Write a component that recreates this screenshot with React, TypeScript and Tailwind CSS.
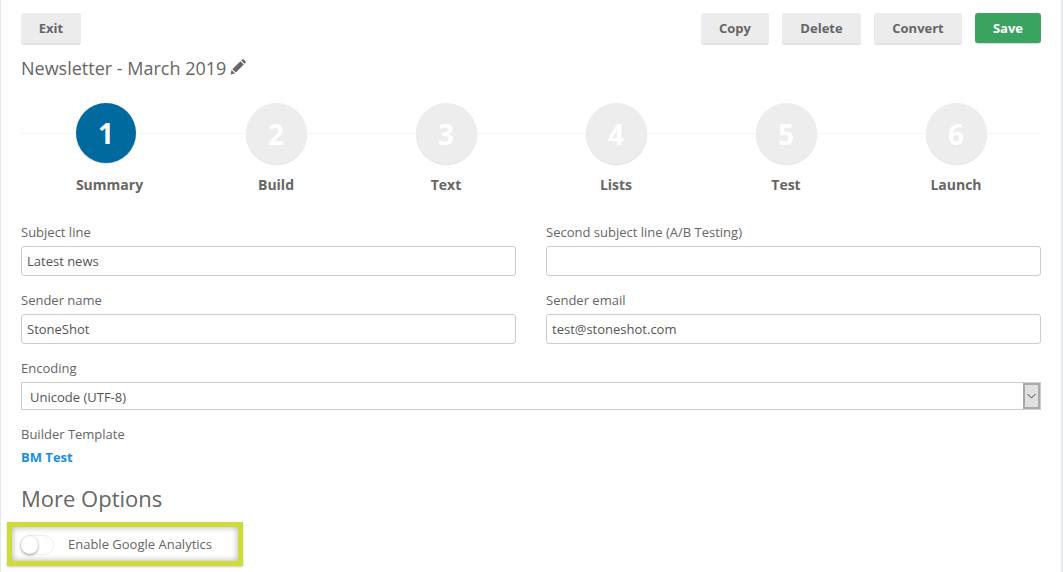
import React from "react";

const Btn = ({ w, children }: { w: string; children: React.ReactNode }) => (
  <button className={`${w} h-8 rounded-[3px] bg-[#ececec] border-b-2 border-[#e2e2e2] text-[13px] font-bold text-[#666] leading-[30px] text-center`}>
    {children}
  </button>
);

const Field = ({ label, value }: { label: string; value: string }) => (
  <div className="flex-1">
    <div className="text-[13px] leading-[18px] text-[#666] h-[18px]">{label}</div>
    <div className="mt-[5px] h-[30px] rounded-[3px] border border-[#ccc] bg-white px-[5px] text-[13px] leading-[28px] text-[#555]">{value}</div>
  </div>
);

const steps = ["Summary", "Build", "Text", "Lists", "Test", "Launch"];

export default function App() {
  return (
    <div className="h-[572px] w-[1063px] overflow-hidden bg-white border-l border-r-2 border-[#e4e9f0] pl-5 pr-5 pt-[13px] font-['Open_Sans',sans-serif] text-[#666]">
      <div className="flex w-[1020px] items-start">
        <Btn w="w-[60px]">Exit</Btn>
        <div className="ml-auto flex gap-[13px]">
          <Btn w="w-[68px]">Copy</Btn>
          <Btn w="w-[79px]">Delete</Btn>
          <Btn w="w-[88px]">Convert</Btn>
          <button className="h-[30px] w-[66px] rounded-[3px] bg-[#3aa35f] pt-px text-[13px] font-bold text-white shadow-[0_1px_1px_#d8d8d8]">Save</button>
        </div>
      </div>

      <div className="mt-[9px] flex h-[28px] items-center gap-[4px] text-[18px] leading-[28px] text-[#666]">
        <span>Newsletter - March 2019</span>
        <svg width="16" height="16" viewBox="0 0 16 16" className="-mt-[3px]" fill="#666">
          <path d="M0.5 15.5 L1.6 11 L5 14.4 Z" />
          <path d="M2.4 10.2 L10.4 2.2 L13.8 5.6 L5.8 13.6 Z" />
          <path d="M11.2 1.4 L12.3 0.4 Q13 -0.1 13.7 0.5 L15.5 2.3 Q16.1 3 15.6 3.7 L14.6 4.8 Z" />
        </svg>
      </div>

      <div className="relative mt-[21px] flex w-[1020px]">
        <div className="absolute left-0 right-0 top-[30px] h-px bg-[#f5f5f5]" />
        {steps.map((s, i) => (
          <div key={s} className="relative flex w-[170px] flex-col items-center">
            <div
              className={
                i === 0
                  ? "flex h-[60px] w-[60px] items-center justify-center rounded-full bg-[#006a9e] text-[28px] font-bold text-white shadow-[0_1px_2px_#ddd]"
                  : "flex h-[61px] w-[61px] items-center justify-center rounded-full bg-[#ededed] text-[28px] font-bold text-white shadow-[0_1px_1px_#e0e0e0]"
              }
            >
              {i + 1}
            </div>
            <div className={`text-[14px] font-bold leading-[20px] text-[#666] ${i === 0 ? "mt-[12px] pl-[7px]" : "mt-[11px]"}`}>{s}</div>
          </div>
        ))}
      </div>

      <div className="mt-[28px] w-[1020px]">
        <div className="flex gap-[30px]">
          <Field label="Subject line" value="Latest news" />
          <Field label="Second subject line (A/B Testing)" value="" />
        </div>
        <div className="mt-[15px] flex gap-[30px]">
          <Field label="Sender name" value="StoneShot" />
          <Field label="Sender email" value="test@stoneshot.com" />
        </div>
        <div className="mt-[15px] text-[13px] leading-[18px] text-[#666]">Encoding</div>
        <div className="mt-[5px] flex h-[28px] items-center border border-[#ccc] bg-white pl-2 text-[13px] text-[#555]">
          <span className="flex-1 pt-[4px]">Unicode (UTF-8)</span>
          <div className="flex h-[26px] w-[17px] items-center justify-center border-2 border-[#aaa] bg-[#e0e0e0]">
            <svg width="9" height="6" viewBox="0 0 9 6" fill="none" stroke="#444" strokeWidth="1">
              <path d="M0.5 1 L4.5 5 L8.5 1" />
            </svg>
          </div>
        </div>
        <div className="mt-[15px] text-[13px] leading-[18px] text-[#666]">Builder Template</div>
        <div className="mt-[5px] text-[13px] font-bold leading-[18px] text-[#1b8fd6]">BM Test</div>
        <div className="mt-[17px] text-[22px] leading-[30px] text-[#666]">More Options</div>
        <div className="-ml-[14px] mt-[9px] flex h-[44px] w-[236px] items-center border-[5px] border-[#cddc39] pl-[8px] pt-[2px] shadow-[inset_0_0_6px_#aaa,0_1px_2px_#ccc]">
          <div className="relative h-[20px] w-[34px] rounded-full border border-[#eee] bg-white">
            <div className="absolute left-0 top-0 h-[18px] w-[17px] rounded-full bg-white shadow-[0_1px_3px_#999]" />
          </div>
          <span className="ml-[14px] text-[13px] text-[#666]">Enable Google Analytics</span>
        </div>
      </div>
    </div>
  );
}
